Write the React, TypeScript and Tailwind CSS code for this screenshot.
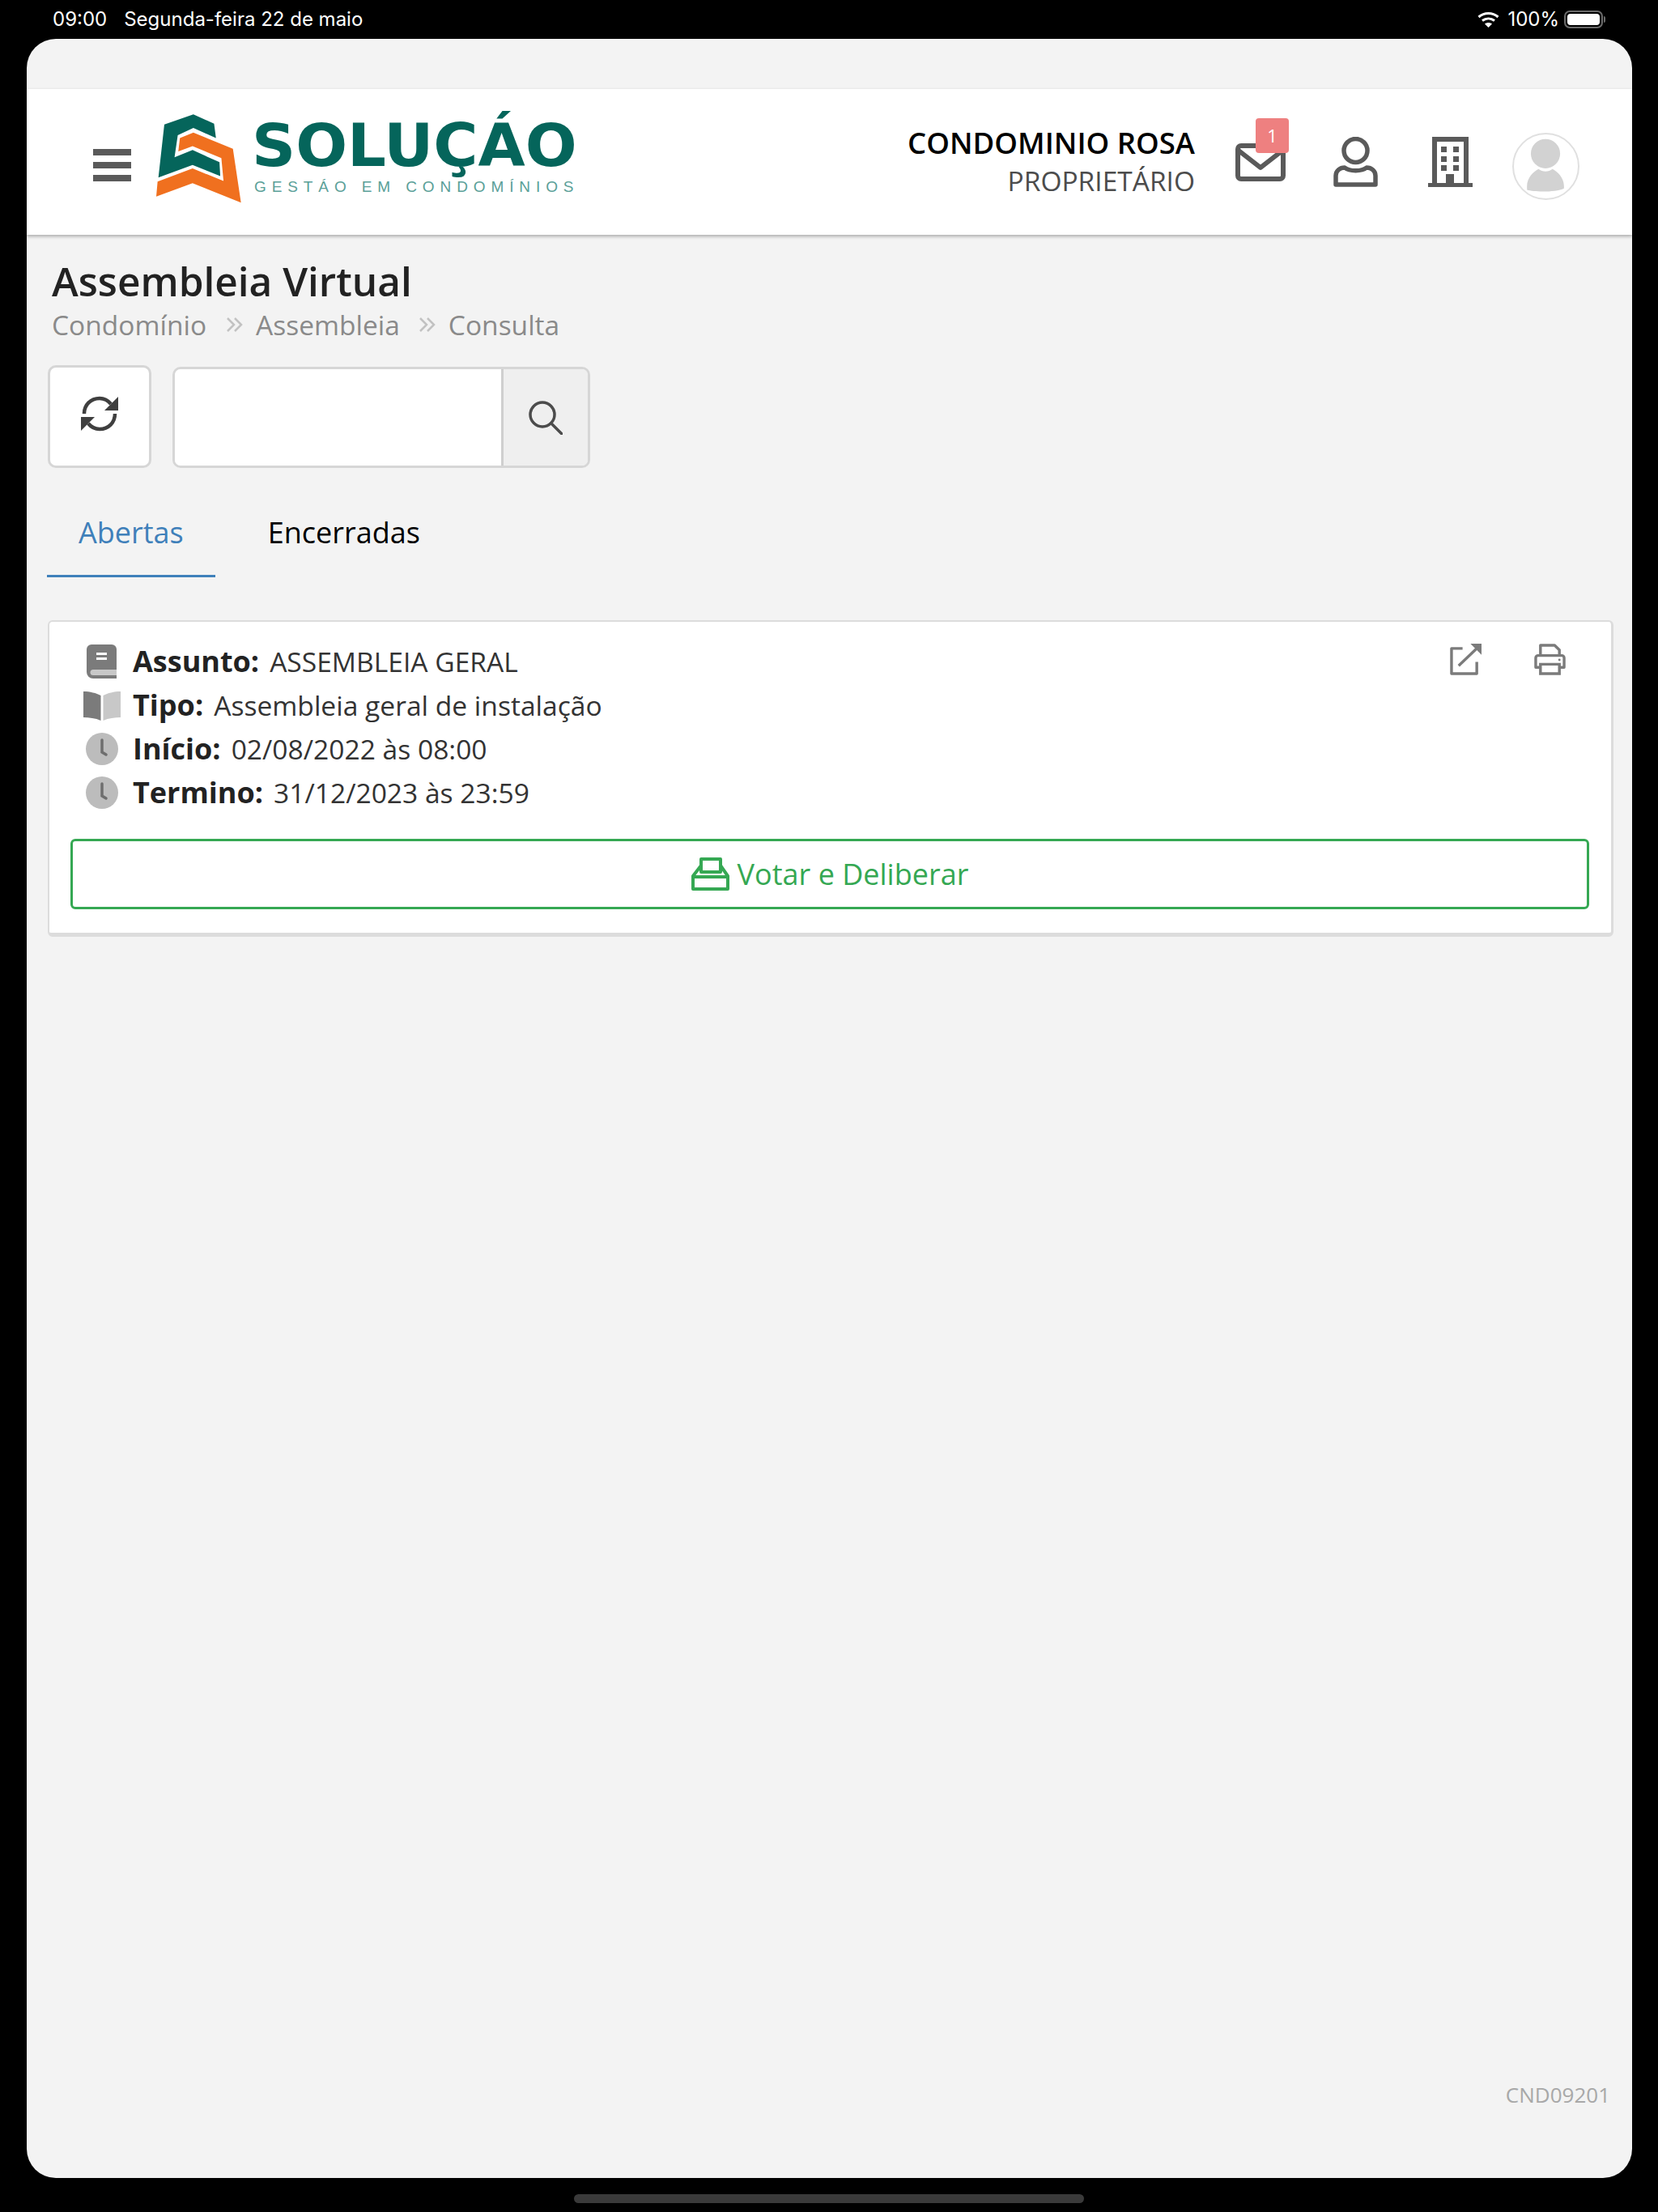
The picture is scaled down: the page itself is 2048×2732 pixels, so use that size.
import type { ReactNode } from "react";

const font = "font-['Open_Sans',sans-serif]";

const StatusBar = () => (
  <div className="flex h-12 items-center justify-between pl-[65px] pr-[65px] text-white">
    <div className="flex gap-[21px] font-['Inter',sans-serif] text-[24px]">
      <span>09:00</span>
      <span>Segunda-feira 22 de maio</span>
    </div>
    <div className="flex items-center">
      <svg viewBox="0 0 27 20" className="mr-[10px] h-[20px] w-[27px]" fill="none" stroke="white" strokeWidth="3">
        <path d="M1.500 7c7-6 17-6 24 0" />
        <path d="M6 11.500c4.500-3.500 10.500-3.500 15 0" />
        <path d="M13.500 20l-4.500-4.500c2.500-2 6.500-2 9 0z" fill="white" stroke="none" />
      </svg>
      <span className="font-['Inter',sans-serif] text-[24px]">100%</span>
      <span className="ml-[6px] flex h-[22px] w-[48px] items-center rounded-[7px] border-2 border-[#6b6b6b] p-[2px]">
        <span className="h-full w-full rounded-[4px] bg-white" />
      </span>
      <span className="ml-[1px] h-[8px] w-[2px] rounded-r bg-[#6b6b6b]" />
    </div>
  </div>
);

const Logo = () => (
  <div className="flex h-[110px] items-start">
    <svg viewBox="130 62 316 330" className="h-[110px] w-[105px]">
      <path d="M138 297 L160 100 L268 62 L345 97 L352 150 L268 113 L210 140 L198 222 L265 195 L365 240 L368 292 L265 250 Z" fill="#05655b" />
      <path d="M218 150 L268 130 L415 190 L445 390 L265 318 L130 368 L135 312 L265 263 L380 310 L372 225 L265 180 L212 200 Z" fill="#f0701f" />
    </svg>
    <div className="ml-[16px] flex flex-col">
      <span className="ml-[-3px] mt-[6px] h-[66px] origin-left scale-x-[1.03] font-['DejaVu_Sans',sans-serif] text-[73px] leading-[66px] font-bold text-[#05655b]">
        SOLUÇÁO
      </span>
      <span className="mt-[8px] whitespace-nowrap font-['Liberation_Sans',sans-serif] text-[19px] leading-5 tracking-[6.9px] text-[#5aa098]">
        GESTÁO EM CONDOMÍNIOS
      </span>
    </div>
  </div>
);

const HeaderIcons = () => (
  <div className="flex items-center">
    <div className="relative ml-[50px] h-[47px] w-[62px]">
      <svg viewBox="0 0 62 47" className="h-[47px] w-[62px]" fill="none" stroke="#5a5a5a" strokeWidth="6" strokeLinejoin="round">
        <rect x="3" y="3" width="56" height="41" rx="4" />
        <path d="M4 9l27 21 27-21" />
      </svg>
      <span className="absolute right-[-4px] top-[-31px] flex h-[43px] w-[41px] items-center justify-center rounded-[4px] bg-[#ee8080] text-[22px] text-white">
        1
      </span>
    </div>
    <svg viewBox="0 0 55 62" className="ml-[59px] h-[62px] w-[55px]" fill="none" stroke="#5a5a5a" strokeWidth="5.500">
      <circle cx="27.500" cy="17" r="14.500" />
      <path d="M3 59V48C3 42 8 38 14 38C20 43 35 43 41 38C47 38 52 42 52 48V59Z" strokeLinejoin="round" />
    </svg>
    <svg viewBox="0 0 55 62" className="ml-[62px] h-[62px] w-[55px]" fill="#5a5a5a">
      <path d="M5 0h45v57h5v5H0v-5h5zM11 6v51h11V46h10v11h12V6z" />
      <rect x="16" y="12" width="7" height="7" />
      <rect x="31" y="12" width="7" height="7" />
      <rect x="16" y="24" width="7" height="7" />
      <rect x="31" y="24" width="7" height="7" />
      <rect x="16" y="35" width="7" height="7" />
      <rect x="31" y="35" width="7" height="7" />
    </svg>
    <div className="ml-[49px] mt-[10px] flex h-[83px] w-[83px] items-center justify-center overflow-hidden rounded-full border-2 border-[#e0e0e0] bg-white">
      <svg viewBox="0 0 83 83" className="h-[79px] w-[79px]" fill="#d2d2d2">
        <circle cx="41" cy="25" r="19" />
        <path d="M17 72V67C17 56 26 48 32 45C37 49 45 49 50 45C56 48 65 56 65 67V70C55 75 27 75 17 72Z" />
      </svg>
    </div>
  </div>
);

const Header = () => (
  <header className="mt-[62px] flex h-[180px] items-center justify-between bg-white pl-[82px] pr-[65px] shadow-[0_2px_4px_rgba(0,0,0,0.3)]">
    <div className="flex items-center">
      <div className="mt-[8px] flex w-[47px] flex-col gap-[8px]">
        <span className="h-[8px] bg-[#5a5a5a]" />
        <span className="h-[8px] bg-[#5a5a5a]" />
        <span className="h-[8px] bg-[#5a5a5a]" />
      </div>
      <div className="ml-[31px] mt-[-8px]">
        <Logo />
      </div>
    </div>
    <div className="flex items-center">
      <div className="text-right">
        <div className="text-[36.500px] leading-[47px] font-semibold text-black">CONDOMINIO ROSA</div>
        <div className="text-[33.500px] leading-[47px] text-[#4c4c4c]">PROPRIETÁRIO</div>
      </div>
      <HeaderIcons />
    </div>
  </header>
);

const Chevrons = ({ left, right }: { left: string; right: string }) => (
  <svg viewBox="0 0 22 18" className={`h-[18px] w-[22px] ${left} ${right}`} fill="none" stroke="#c2c2c2" strokeWidth="2.500">
    <path d="M2 1l8 8-8 8M11 1l8 8-8 8" />
  </svg>
);

const Toolbar = () => (
  <div className="mt-[27px] flex items-start pl-[26px]">
    <button type="button" className="flex h-[127px] w-[128px] items-center justify-center rounded-[10px] border-[3px] border-[#d6d6d6] bg-white">
      <svg viewBox="0 0 46 46" className="mb-[8px] h-[46px] w-[46px]" fill="none" stroke="#3f3f3f" strokeWidth="4.500">
        <path d="M4 23C4 12 12 4 23 4c6 0 10 2 14 7" />
        <path d="M46 2v17H29z" fill="#3f3f3f" stroke="none" />
        <path d="M42 23c0 11-8 19-19 19-6 0-10-2-14-7" />
        <path d="M0 44V27h17z" fill="#3f3f3f" stroke="none" />
      </svg>
    </button>
    <div className="ml-[26px] mt-[2px] flex h-[125px] w-[516px] overflow-hidden rounded-[10px] border-[3px] border-[#d6d6d6]">
      <div className="flex-1 border-r-[3px] border-[#cfcfcf] bg-white" />
      <div className="flex w-[104px] items-center justify-center bg-[#efefef]">
        <svg viewBox="0 0 42 42" className="h-[42px] w-[42px]" fill="none" stroke="#4c4c4c" strokeWidth="3.500">
          <circle cx="17" cy="17" r="15" />
          <path d="M28 28l13 13" strokeLinecap="round" />
        </svg>
      </div>
    </div>
  </div>
);

const Tabs = () => (
  <div className="mt-[33px] flex pl-[25px] text-[36px] leading-[48px]">
    <div className="border-b-[3px] border-[#3f80ba] px-[39px] pb-[28px] pt-[23px] text-[#3f80ba]">Abertas</div>
    <div className="px-[65px] pb-[28px] pt-[23px] text-black">Encerradas</div>
  </div>
);

const BookIcon = () => (
  <svg viewBox="0 0 37 42" className="h-[42px] w-[37px]">
    <path d="M6 0h25a6 6 0 0 1 6 6v36H8a8 8 0 0 1-8-8V6a6 6 0 0 1 6-6z" fill="#7b7b7b" />
    <path d="M8 31h29v7H8a3.500 3.500 0 0 1 0-7z" fill="#c8c8c8" />
    <path d="M12 10h13v3H12zM12 16h13v3H12z" fill="#ffffff" />
  </svg>
);

const OpenBookIcon = () => (
  <svg viewBox="0 0 46 37" className="h-[37px] w-[46px]">
    <path d="M0 1c8 0 16 2 21.500 5v31C15 34 7 33 0 33z" fill="#7b7b7b" />
    <path d="M46 1c-8 0-16 2-21.500 5v31C31 34 39 33 46 33z" fill="#c8c8c8" />
  </svg>
);

const ClockIcon = () => (
  <svg viewBox="0 0 40 40" className="h-[40px] w-[40px]">
    <circle cx="20" cy="20" r="20" fill="#bcbcbc" />
    <path d="M20 9v15l5 3" fill="none" stroke="#6e6e6e" strokeWidth="3.500" strokeLinecap="round" />
  </svg>
);

const InfoRow = ({ icon, label, value }: { icon: ReactNode; label: string; value: string }) => (
  <div className="flex h-[54px] items-center">
    <div className="flex w-[69px] justify-center pr-[8px]">{icon}</div>
    <span className="text-[36px] font-bold text-[#222]">{label}</span>
    <span className="ml-[13px] text-[33.600px] text-[#333]">{value}</span>
  </div>
);

const Card = () => (
  <div className="ml-[26px] mr-[23px] mt-[53px] rounded-[6px] border-2 border-r-[3px] border-b-[5px] border-[#dcdcdc] bg-white pb-[29px] pl-[26px] pr-[27px] pt-[22px]">
    <div className="flex justify-between">
      <div className="pl-[8px]">
        <InfoRow icon={<BookIcon />} label="Assunto:" value="ASSEMBLEIA GERAL" />
        <InfoRow icon={<OpenBookIcon />} label="Tipo:" value="Assembleia geral de instalação" />
        <InfoRow icon={<ClockIcon />} label="Início:" value="02/08/2022 às 08:00" />
        <InfoRow icon={<ClockIcon />} label="Termino:" value="31/12/2023 às 23:59" />
      </div>
      <div className="flex items-start gap-[65px] pr-[29px] pt-[5px] text-[#7b7b7b]">
        <svg viewBox="0 0 40 40" className="h-[39px] w-[39px]" fill="none" stroke="currentColor" strokeWidth="3.500">
          <path d="M16 6H2v32h32V23" strokeLinejoin="round" />
          <path d="M11 28L36 4" />
          <path d="M26 0h14v14z" fill="currentColor" stroke="none" />
        </svg>
        <svg viewBox="0 0 40 40" className="h-[39px] w-[39px]" fill="none" stroke="currentColor" strokeWidth="3.500">
          <path d="M8 16V2h18l6 6v8" strokeLinejoin="round" />
          <path d="M8 30H2V18a3 3 0 0 1 3-3h30a3 3 0 0 1 3 3v12h-6" strokeLinejoin="round" />
          <path d="M8 26h24v12H8z" />
          <circle cx="32" cy="20.500" r="1.500" fill="currentColor" stroke="none" />
        </svg>
      </div>
    </div>
    <button type="button" className="mt-[30px] flex h-[87px] w-full items-center justify-center gap-[10px] rounded-[6px] border-[3px] border-[#35a853] text-[36px] text-[#35a853]">
      <svg viewBox="0 0 47 41" className="h-[41px] w-[47px]" fill="none" stroke="currentColor" strokeWidth="4" strokeLinejoin="round">
        <path d="M12 18V2h24v16z" />
        <path d="M12 10L2 23v16h43V23L36 10" />
        <path d="M2 24h43" />
      </svg>
      Votar e Deliberar
    </button>
  </div>
);

export default function App() {
  return (
    <div className={`h-[2732px] w-[2048px] bg-black ${font}`}>
      <StatusBar />
      <main className="ml-[33px] flex h-[2642px] w-[1983px] flex-col overflow-hidden rounded-[36px] bg-[#f3f3f3]">
        <Header />
        <div className="pl-[31px] pt-[28px]">
          <h1 className="text-[49.500px] leading-[58px] font-semibold text-[#222]">Assembleia Virtual</h1>
          <div className="mt-[2px] flex items-center text-[33.500px] leading-[46px] text-[#8a8a8a]">
            <span>Condomínio</span>
            <Chevrons left="ml-[24px]" right="mr-[15px]" />
            <span>Assembleia</span>
            <Chevrons left="ml-[23px]" right="mr-[15px]" />
            <span>Consulta</span>
          </div>
        </div>
        <Toolbar />
        <Tabs />
        <Card />
        <div className="mt-auto pb-[83px] pr-[27px] text-right text-[26px] text-[#a8a8a8]">CND09201</div>
      </main>
      <div className="mx-auto mt-[20px] h-[11px] w-[630px] rounded-full bg-[#3a3a3a]" />
    </div>
  );
}
